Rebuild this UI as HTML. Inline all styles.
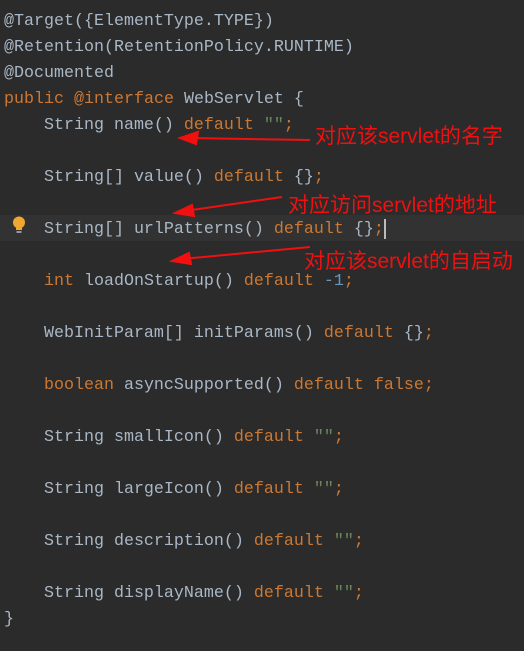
<!DOCTYPE html>
<html><head><meta charset="utf-8"><style>
body{margin:0;width:524px;height:651px;background:#2b2b2b;overflow:hidden;position:relative;font-family:"Liberation Mono",monospace;font-size:16.67px;color:#a9b7c6}
.l{position:absolute;left:4px;height:26px;line-height:26px;white-space:pre}
.k{color:#cc7832}.s{color:#6a8759}.n{color:#6897bb}
.hl{position:absolute;left:0;top:215px;width:524px;height:26px;background:#323232}
.r{position:absolute;color:#f01010;font-family:"Liberation Sans","Noto Sans CJK SC",sans-serif;font-size:21px;white-space:nowrap;line-height:26px}
</style></head><body>
<div class="hl"></div>
<div class="l" style="top:9px">@Target({ElementType.TYPE})</div>
<div class="l" style="top:35px">@Retention(RetentionPolicy.RUNTIME)</div>
<div class="l" style="top:61px">@Documented</div>
<div class="l" style="top:87px"><span class="k">public</span> <span class="k">@interface</span> WebServlet {</div>
<div class="l" style="top:113px">    String name() <span class="k">default</span> <span class="s">""</span><span class="k">;</span></div>
<div class="l" style="top:165px">    String[] value() <span class="k">default</span> {}<span class="k">;</span></div>
<div class="l" style="top:217px">    String[] urlPatterns() <span class="k">default</span> {}<span class="k">;</span><span style="display:inline-block;width:2px;height:20px;background:#bbb;vertical-align:middle"></span></div>
<div class="l" style="top:269px">    <span class="k">int</span> loadOnStartup() <span class="k">default</span> <span class="n">-1</span><span class="k">;</span></div>
<div class="l" style="top:321px">    WebInitParam[] initParams() <span class="k">default</span> {}<span class="k">;</span></div>
<div class="l" style="top:373px">    <span class="k">boolean</span> asyncSupported() <span class="k">default false;</span></div>
<div class="l" style="top:425px">    String smallIcon() <span class="k">default</span> <span class="s">""</span><span class="k">;</span></div>
<div class="l" style="top:477px">    String largeIcon() <span class="k">default</span> <span class="s">""</span><span class="k">;</span></div>
<div class="l" style="top:529px">    String description() <span class="k">default</span> <span class="s">""</span><span class="k">;</span></div>
<div class="l" style="top:581px">    String displayName() <span class="k">default</span> <span class="s">""</span><span class="k">;</span></div>
<div class="l" style="top:607px">}</div>
<svg style="position:absolute;left:12px;top:216px" width="16" height="20"><circle cx="7" cy="6.5" r="6" fill="#f0a732"/><rect x="4" y="12" width="6" height="2" fill="#f0a732"/><rect x="4.5" y="15" width="5" height="2" fill="#999"/></svg>
<div class="r" style="left:315px;top:124px">对应该servlet的名字</div>
<div class="r" style="left:288px;top:193px">对应访问servlet的地址</div>
<div class="r" style="left:304px;top:249px">对应该servlet的自启动</div>
<svg style="position:absolute;left:0;top:0" width="524" height="651">
<g stroke="#f01010" stroke-width="2" fill="#f01010">
<line x1="310" y1="140" x2="190" y2="138"/><polygon points="180,138 198,132 196,144"/>
<line x1="282" y1="197" x2="185" y2="211"/><polygon points="175,213 192,205 194,216"/>
<line x1="310" y1="247" x2="182" y2="259"/><polygon points="172,261 189,253 191,264"/>
</g></svg>
</body></html>
